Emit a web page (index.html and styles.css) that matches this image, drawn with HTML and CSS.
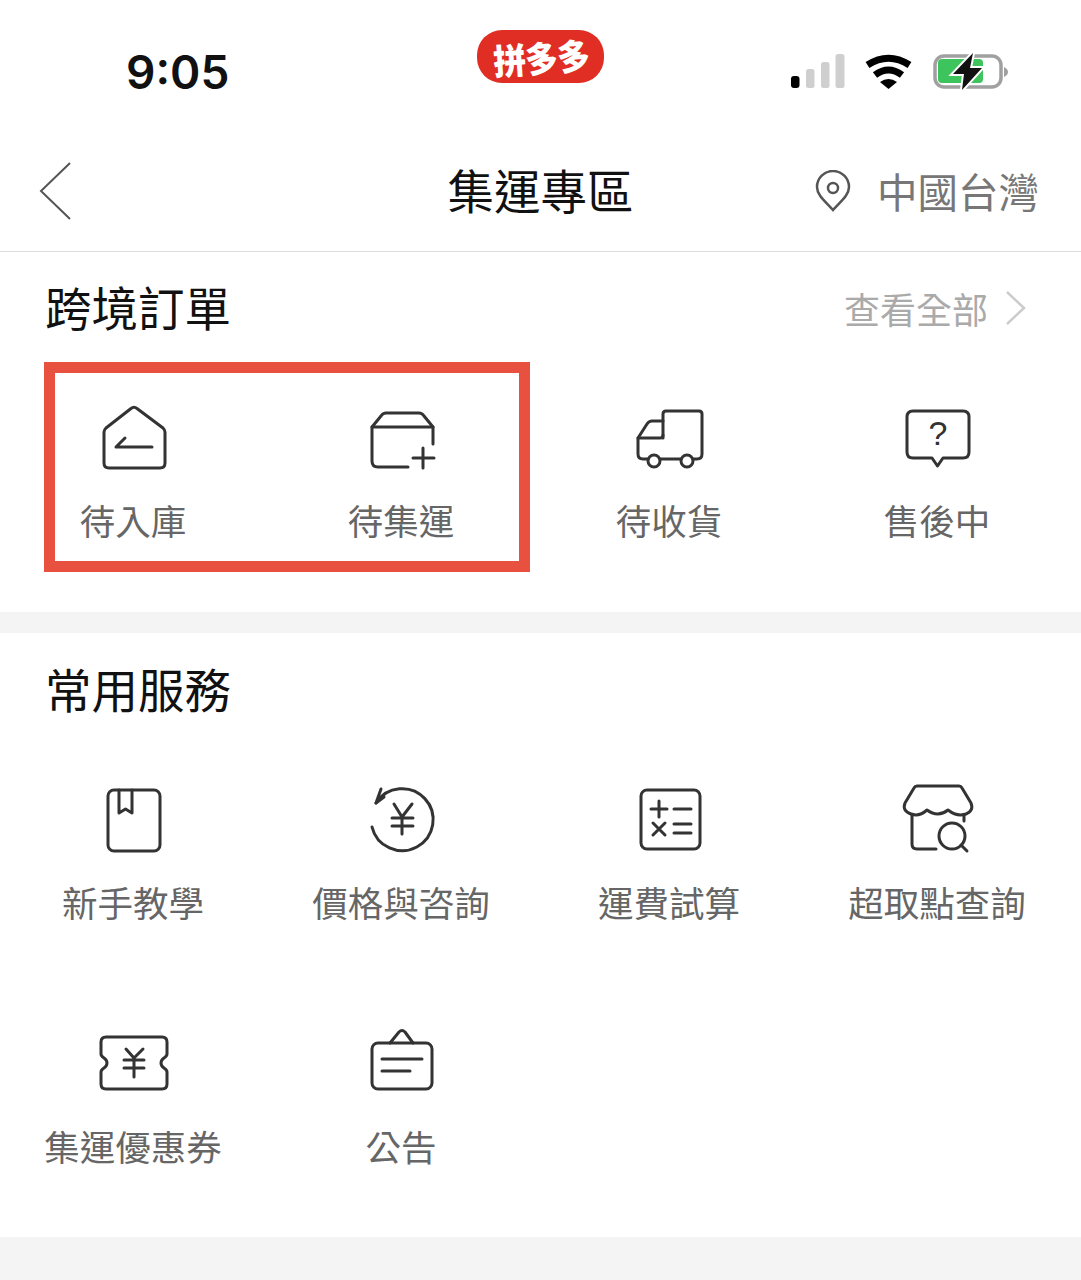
FILE: index.html
```html
<!DOCTYPE html>
<html lang="zh-Hant">
<head>
<meta charset="utf-8">
<title>集運專區</title>
<link rel="stylesheet" href="styles.css">
</head>
<body>
<header class="status-bar">
  <div class="time">9:05</div>
  <div class="badge"><span class="badge-text">拼多多</span></div>
  <div class="status-icons">
    <svg class="signal" viewBox="0 0 54 36" width="54" height="36">
      <rect class="bar-on" x="0" y="23" width="8.500" height="12" rx="3"/>
      <rect class="bar-off" x="15" y="16" width="8.500" height="19" rx="2.500"/>
      <rect class="bar-off" x="30" y="9" width="8.500" height="26" rx="2.500"/>
      <rect class="bar-off" x="44.500" y="1" width="9" height="34" rx="2.500"/>
    </svg>
    <svg class="wifi" viewBox="0 0 47 36" width="47" height="36">
      <path class="wifi-arc" d="M2.500 12 Q23.500 -1.500 44.500 12"/>
      <path class="wifi-arc" d="M10 22 Q23.500 12 37 22"/>
      <path class="wifi-dot" d="M15 29 Q23.500 23 32 29 L23.500 36 Z"/>
    </svg>
    <svg class="battery" viewBox="0 0 75 38" width="75" height="38">
      <rect class="batt-shell" x="2" y="3" width="66" height="31" rx="9"/>
      <rect class="batt-fill" x="5" y="6" width="45" height="24" rx="4"/>
      <path class="batt-nub" d="M71 14 Q75 16 75 19 Q75 22 71 24 Z"/>
      <path class="batt-bolt" d="M40 0 L20 21 L31 21 L29 37 L49 15 L37 15 Z"/>
    </svg>
  </div>
</header>

<nav class="nav-bar">
  <div class="nav-left">
    <svg class="back" viewBox="0 0 34 60" width="34" height="60"><path d="M32 2 L3 30 L32 58"/></svg>
  </div>
  <h1 class="nav-title">集運專區</h1>
  <div class="nav-right">
    <svg class="pin" viewBox="0 0 36 42" width="36" height="42">
      <path d="M18 40 C10 31 2 25 2 17 A16 16 0 0 1 34 17 C34 25 26 31 18 40 Z"/>
      <circle cx="18" cy="18" r="5"/>
    </svg>
    <span class="region">中國台灣</span>
  </div>
</nav>

<section class="panel panel-orders">
  <div class="panel-head">
    <h2 class="panel-title">跨境訂單</h2>
    <a class="view-all">查看全部
      <svg class="more" viewBox="0 0 22 36" width="22" height="36"><path d="M2 2 L19 18 L2 34"/></svg>
    </a>
  </div>
  <div class="grid">
    <div class="cell">
      <svg class="icon" viewBox="0 0 80 80"><path d="M38 10.500 Q41 8 44 10.500 L70 30 Q72 32 72 34 V65 Q72 70 67 70 H16 Q11 70 11 65 V34 Q11 32 13 30 Z"/><path d="M59 49 H23 L32 40"/></svg>
      <span class="label">待入庫</span>
    </div>
    <div class="cell">
      <svg class="icon" viewBox="0 0 80 80"><path d="M47 69 H17 Q11 69 11 63 V29 L20 18 Q22 15 25 15 H58 Q61 15 63 18 L72 29 V46"/><path d="M11 29 H72"/><path d="M52 60 H73 M62 50 V70"/></svg>
      <span class="label">待集運</span>
    </div>
    <div class="cell">
      <svg class="icon" viewBox="0 0 80 80"><path d="M34 40 V16 Q34 13 37 13 H70 Q73 13 73 16 V56 Q73 61 68 61 H64"/><path d="M52 61 H31"/><path d="M19 61 H14 Q9 61 9 56 V40 L18 26 Q20 23 23 23 H34"/><path d="M9 40 H31 Q34 40 34 37"/><circle cx="25" cy="63" r="6"/><circle cx="58" cy="63" r="6"/></svg>
      <span class="label">待收貨</span>
    </div>
    <div class="cell">
      <svg class="icon" viewBox="0 0 80 80"><path d="M16 13 H66 Q72 13 72 19 V54 Q72 60 66 60 H46 L40.500 68 L35 60 H16 Q10 60 10 54 V19 Q10 13 16 13 Z"/><text class="icon-text" x="41" y="47">?</text></svg>
      <span class="label">售後中</span>
    </div>
  </div>
  <div class="highlight"></div>
</section>

<div class="band"></div>

<section class="panel panel-services">
  <div class="panel-head">
    <h2 class="panel-title">常用服務</h2>
  </div>
  <div class="grid">
    <div class="cell">
      <svg class="icon" viewBox="0 0 80 80"><rect x="15" y="11" width="52" height="61" rx="6"/><path d="M26 11 V34 L32.500 30 L39 34 V11"/></svg>
      <span class="label">新手教學</span>
    </div>
    <div class="cell">
      <svg class="icon" viewBox="0 0 80 80"><path d="M15 24 A31 31 0 1 1 11 48"/><path d="M20 10 L15 24 L23 18"/><path d="M33 25 L41 38 L51 25 M31 39 H52 M31 47 H52 M41 38 V55"/></svg>
      <span class="label">價格與咨詢</span>
    </div>
    <div class="cell">
      <svg class="icon" viewBox="0 0 80 80"><rect x="12" y="11" width="59" height="59" rx="6"/><path d="M22 30 H38 M30 22 V38 M45 30 H62 M24 44 L36 56 M36 44 L24 56 M45 45 H62 M45 54 H62"/></svg>
      <span class="label">運費試算</span>
    </div>
    <div class="cell">
      <svg class="icon" viewBox="0 0 80 80"><path d="M30 31 Q22 38 14 35 Q5 32 8 24 L17 9 Q18 7 20 7 H62 Q64 7 65 9 L74 24 Q77 32 69 35 Q60 38 51 31 Q41 39 30 31 Z"/><path d="M15 36 V65 Q15 70 20 70 H39"/><path d="M67 36 V42"/><circle cx="55" cy="57" r="13"/><path d="M64 66 L70 72"/></svg>
      <span class="label">超取點查詢</span>
    </div>
    <div class="cell">
      <svg class="icon" viewBox="0 0 80 80"><path d="M13 14 H69 Q74 14 74 19 V31 Q74 33 71 35 Q68 37 68 40 Q68 43 71 45 Q74 47 74 49 V61 Q74 66 69 66 H13 Q8 66 8 61 V49 Q8 47 11 45 Q14 43 14 40 Q14 37 11 35 Q8 33 8 31 V19 Q8 14 13 14 Z"/><path d="M33 26 L41 35 L50 26 M31 37 H51 M31 45 H51 M41 35 V54"/></svg>
      <span class="label">集運優惠券</span>
    </div>
    <div class="cell">
      <svg class="icon" viewBox="0 0 80 80"><rect x="11" y="20" width="60" height="46" rx="6"/><path d="M29 20 L38 9 Q41 6 44 9 L52 20"/><path d="M21 36 H61 M21 48 H49"/></svg>
      <span class="label">公告</span>
    </div>
  </div>
</section>
</body>
</html>
```

FILE: styles.css
```css
* { box-sizing: border-box; }
html, body { margin: 0; padding: 0; }
body {
  min-height: 1280px;
  background: #f4f4f4;
  font-family: "Noto Sans CJK TC", "Noto Sans", sans-serif;
  overflow: hidden;
}

/* status bar */
.status-bar {
  display: grid;
  grid-template-columns: 1fr auto 1fr;
  height: 130px;
  background: #fff;
}
.time {
  margin: 44px 0 0 126px;
  font-family: Inter, "Liberation Sans", sans-serif;
  font-size: 46px;
  line-height: 56px;
  font-weight: 600;
  color: #111;
}
.badge {
  display: flex;
  align-items: center;
  justify-content: center;
  width: 127px;
  height: 53px;
  margin-top: 30px;
  border-radius: 25px;
  background: #e02e24;
}
.badge-text {
  display: inline-block;
  color: #fff;
  font-size: 33px;
  line-height: 40px;
  font-weight: 900;
  letter-spacing: -1px;
  transform: rotate(-4deg) scale(1, 1.08);
}
.status-icons {
  display: flex;
  justify-content: flex-end;
  align-items: flex-start;
  gap: 20px;
  padding: 53px 73px 0 0;
}
.status-icons svg { display: block; flex: none; }
.wifi { margin-right: 1px; }
.bar-on { fill: #000; }
.bar-off { fill: #cfcfcf; }
.wifi-arc { fill: none; stroke: #000; stroke-width: 7; }
.wifi-dot { fill: #000; }
.batt-shell { fill: #fff; stroke: #a0a0a0; stroke-width: 3.500; }
.batt-fill { fill: #3dc45c; }
.batt-nub { fill: #a0a0a0; }
.batt-bolt { fill: #111; stroke: #fff; stroke-width: 4; paint-order: stroke; }

/* nav */
.nav-bar {
  display: grid;
  grid-template-columns: 1fr auto 1fr;
  align-items: center;
  height: 122px;
  padding: 0 44px;
  background: #fff;
  border-bottom: 1px solid #dcdcdc;
}
.nav-left { display: flex; align-items: center; margin-left: -6px; }
.back { display: block; }
.back path { fill: none; stroke: #555; stroke-width: 2; }
.nav-title {
  margin: 0 0 4px;
  font-size: 46.500px;
  line-height: 60px;
  font-weight: 400;
  color: #111;
}
.nav-right {
  display: flex;
  align-items: center;
  justify-content: flex-end;
  gap: 26px;
  margin-right: -2px;
}
.pin { display: block; }
.pin path, .pin circle { fill: none; stroke: #555; stroke-width: 2.500; }
.region {
  font-size: 40.500px;
  line-height: 56px;
  color: #777;
}

/* panels */
.panel {
  position: relative;
  background: #fff;
  padding: 27px 0 67px;
}
.panel-services { padding: 28px 0 66px; }
.band { height: 21px; }
.panel-head {
  display: flex;
  align-items: center;
  justify-content: space-between;
  height: 60px;
  padding: 0 54px 0 45px;
  margin-bottom: 59px;
}
.panel-services .panel-head { margin-bottom: 58px; }
.panel-title {
  margin: 0 0 6px;
  font-size: 46.500px;
  line-height: 60px;
  font-weight: 400;
  color: #111;
}
.view-all {
  display: flex;
  align-items: center;
  gap: 17px;
  margin-bottom: 2px;
  font-size: 36px;
  line-height: 50px;
  color: #aaa;
}
.more { display: block; }
.more path { fill: none; stroke: #ccc; stroke-width: 2.500; }

/* grid */
.grid {
  display: grid;
  grid-template-columns: repeat(4, 268px);
  row-gap: 96px;
  margin-left: -1px;
}
.cell {
  display: flex;
  flex-direction: column;
  align-items: center;
  gap: 18px;
}
.panel-orders .cell { gap: 17px; }
.icon {
  display: block;
  width: 80px;
  height: 80px;
  fill: none;
  stroke: #333;
  stroke-width: 3;
  stroke-linecap: round;
  stroke-linejoin: round;
}
.icon-text {
  font-family: "Liberation Sans", sans-serif;
  font-size: 34px;
  fill: #333;
  stroke: none;
  text-anchor: middle;
}
.label {
  font-size: 35.500px;
  line-height: 50px;
  color: #666;
  white-space: nowrap;
}

/* annotation */
.highlight {
  position: absolute;
  left: 44px;
  top: 110px;
  width: 486px;
  height: 210px;
  border: 11px solid #e8503f;
  pointer-events: none;
}
```
